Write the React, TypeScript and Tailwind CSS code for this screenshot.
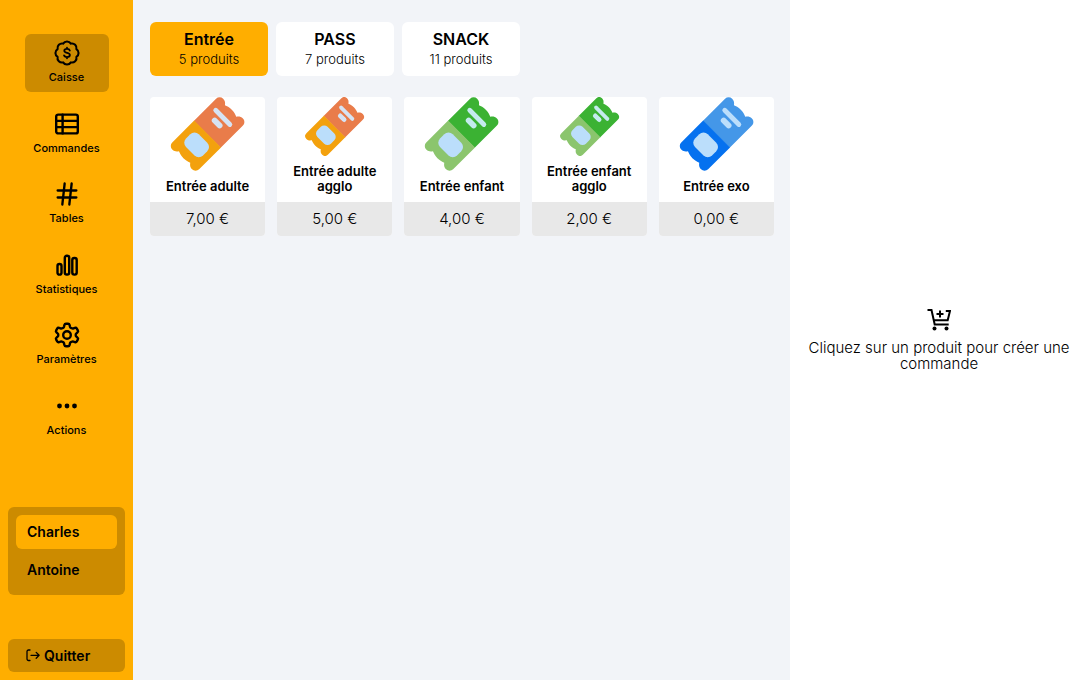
import React from 'react';
import { Hash } from 'lucide-react';

interface IconProps {
  children: React.ReactNode;
}

const Icon: React.FC<IconProps> = ({ children }) => (
  <svg
    className="size-7"
    viewBox="0 0 28 28"
    fill="none"
    stroke="currentColor"
    strokeWidth="2.4"
    strokeLinecap="round"
    strokeLinejoin="round"
    aria-hidden="true"
  >
    {children}
  </svg>
);

const CashIcon = () => (
  <Icon>
    <path
      strokeWidth="2.1"
      d="M10.1 4.6A4.6 4.6 0 0 1 17.9 4.6A4.6 4.6 0 0 1 23.4 10.1A4.6 4.6 0 0 1 23.4 17.9A4.6 4.6 0 0 1 17.9 23.4A4.6 4.6 0 0 1 10.1 23.4A4.6 4.6 0 0 1 4.6 17.9A4.6 4.6 0 0 1 4.6 10.1A4.6 4.6 0 0 1 10.1 4.6Z"
    />
    <path strokeWidth="1.8" d="M16.8 11.6c-.3-1.1-1.3-1.7-2.8-1.7-1.6 0-2.7.7-2.7 1.9 0 2.9 5.6 1.4 5.6 4.3 0 1.3-1.2 2-2.9 2-1.6 0-2.7-.7-3-1.8M14 8.7v1.2M14 18.1v1.2" />
  </Icon>
);

const OrdersIcon = () => (
  <Icon>
    <rect x="3.2" y="4.6" width="21.6" height="18.8" rx="2" />
    <path d="M9.6 4.6v18.8M3.2 10.9h21.6M3.2 17.1h21.6" />
  </Icon>
);

const StatsIcon = () => (
  <Icon>
    <rect x="4.5" y="13" width="4" height="10.6" rx="1.9" />
    <rect x="11.8" y="4.7" width="4.4" height="18.9" rx="2" />
    <rect x="19.3" y="7" width="4.4" height="16.6" rx="2" />
  </Icon>
);

const SettingsIcon = () => (
  <Icon>
    <path d="M11.4 4.1q.3-1.3 1.6-1.3h2q1.3 0 1.6 1.3l.4 1.7q.3 1 1.3 1.3l.4.2q.9.5 1.8.1l1.4-.5q1.3-.4 1.9.7l1 1.8q.7 1.2-.3 2l-1.1 1q-.7.6-.7 1.6t.7 1.6l1.1 1q1 .8.3 2l-1 1.8q-.6 1.1-1.9.7l-1.4-.5q-.9-.4-1.8.1l-.4.2q-1 .3-1.3 1.3l-.4 1.7q-.3 1.3-1.6 1.3h-2q-1.3 0-1.6-1.3L11 22.2q-.3-1-1.3-1.3l-.4-.2q-.9-.5-1.8-.1l-1.4.5q-1.3.4-1.9-.7l-1-1.8q-.7-1.2.3-2l1.1-1q.7-.6.7-1.6t-.7-1.6l-1.1-1q-1-.8-.3-2l1-1.8q.6-1.1 1.9-.7l1.4.5q.9.4 1.8-.1l.4-.2q1-.3 1.3-1.3Z" />
    <circle cx="14" cy="14" r="3.8" />
  </Icon>
);

const DotsIcon = () => (
  <Icon>
    <g fill="currentColor" stroke="none">
      <circle cx="6.5" cy="14" r="2.4" />
      <circle cx="14" cy="14" r="2.4" />
      <circle cx="21.5" cy="14" r="2.4" />
    </g>
  </Icon>
);

const ExitIcon = () => (
  <svg className="size-4" viewBox="0 0 16 16" fill="none" stroke="currentColor" strokeWidth="1.3" strokeLinecap="round" strokeLinejoin="round" aria-hidden="true">
    <path d="M6 2H4.5A1.5 1.5 0 0 0 3 3.5V11a1.5 1.5 0 0 0 1.5 1.5H6M7 7.3h8M12.2 4.4l2.9 2.9-2.9 2.9" />
  </svg>
);

const CartIcon = () => (
  <svg className="size-6" viewBox="0 0 24 24" fill="none" stroke="currentColor" strokeWidth="2" aria-hidden="true">
    <path d="M.5 2h4l3.2 14.5h14M6.5 12.3h14.2L23 3h-4.2M13 2.5v7M9.5 6h7" />
    <circle cx="7.5" cy="20.5" r="2" fill="currentColor" stroke="none" />
    <circle cx="19.5" cy="20.5" r="2" fill="currentColor" stroke="none" />
  </svg>
);

interface TicketProps {
  top: string;
  bottom: string;
  detail: string;
}

const Ticket: React.FC<TicketProps> = ({ top, bottom, detail }) => (
  <svg className="h-full w-full" viewBox="0 0 74 74" aria-hidden="true">
    <g transform="translate(37 37) rotate(45)">
      <path fill={top} d="M-19 .5V-31a5 5 0 0 1 5-5c3 0 4.5 1.500 6 3.500 2-.8 4.500-1.700 8-1.700s6 .9 8 1.700c1.500-2 3-3.500 6-3.500a5 5 0 0 1 5 5V.5Z" />
      <path fill={bottom} d="M-19 0v31a5 5 0 0 0 5 5c3 0 4.5-1.5 6-3.5 2 .8 4.5 1.7 8 1.7s6-.9 8-1.7c1.5 2 3 3.5 6 3.5a5 5 0 0 0 5-5V0Z" />
      <rect x="-12" y="6.5" width="24" height="18" rx="6" fill="#bbdefb" />
      <path d="M-11-22.5H9" stroke={detail} strokeWidth="4.8" strokeLinecap="round" />
      <path d="M-4.5-14.5h7" stroke={detail} strokeWidth="5.8" strokeLinecap="round" />
    </g>
  </svg>
);

const navItems = [
  { label: 'Caisse', icon: <CashIcon />, active: true },
  { label: 'Commandes', icon: <OrdersIcon /> },
  { label: 'Tables', icon: <Hash className="size-7" strokeWidth={2} /> },
  { label: 'Statistiques', icon: <StatsIcon /> },
  { label: 'Paramètres', icon: <SettingsIcon /> },
  { label: 'Actions', icon: <DotsIcon /> },
];

const categories = [
  { name: 'Entrée', count: 5, active: true },
  { name: 'PASS', count: 7 },
  { name: 'SNACK', count: 11 },
];

const orange = { top: '#e97c4a', bottom: '#f3a10d', detail: '#d6e3f3' };
const green = { top: '#3bb233', bottom: '#8bc56d', detail: '#c4ebee' };
const blue = { top: '#4497e8', bottom: '#0571ef', detail: '#bbdefb' };

const products = [
  { name: 'Entrée adulte', price: '7,00 €', colors: orange },
  { name: 'Entrée adulte agglo', price: '5,00 €', colors: orange },
  { name: 'Entrée enfant', price: '4,00 €', colors: green },
  { name: 'Entrée enfant agglo', price: '2,00 €', colors: green },
  { name: 'Entrée exo', price: '0,00 €', colors: blue },
];

const Sidebar = () => (
  <aside className="flex w-[133px] shrink-0 flex-col bg-[#ffae00] px-2 pt-[34px] pb-2">
    <nav className="flex h-[411px] flex-col items-center justify-between">
      {navItems.map((item) => (
        <button
          key={item.label}
          className={`flex h-[58px] w-[84px] flex-col items-center justify-center rounded-md text-[11px] leading-5 font-medium ${item.active ? 'bg-[#cc8b00]' : ''}`}
        >
          {item.icon}
          <span>{item.label}</span>
        </button>
      ))}
    </nav>
    <div className="mt-auto mb-11 flex flex-col gap-1 rounded-md bg-[#cc8b00] p-2">
      <button className="h-[34px] rounded-md bg-[#ffae00] px-[11px] text-left text-sm font-semibold">Charles</button>
      <button className="h-[34px] rounded-md px-[11px] text-left text-sm font-semibold">Antoine</button>
    </div>
    <button className="flex h-[33px] items-center gap-1 rounded-md bg-[#cc8b00] px-4 text-sm font-semibold">
      <ExitIcon />
      Quitter
    </button>
  </aside>
);

const App = () => (
  <div className="flex min-h-screen bg-white font-[Inter,sans-serif] text-black">
    <Sidebar />
    <main className="min-w-0 flex-1 bg-[#f2f4f8] pt-[22px] pr-4 pl-[17px]">
      <div className="flex gap-2">
        {categories.map((category) => (
          <button
            key={category.name}
            className={`flex h-[54px] w-[118px] flex-col items-center justify-center rounded-md ${category.active ? 'bg-[#ffae00]' : 'bg-white'}`}
          >
            <span className="text-base leading-5 font-semibold">{category.name}</span>
            <span className="text-[13px] leading-5 font-light">{category.count} produits</span>
          </button>
        ))}
      </div>
      <div className="mt-[21px] grid grid-cols-5 gap-3">
        {products.map((product) => (
          <button key={product.name} className="flex h-[139px] flex-col overflow-hidden rounded-sm bg-white">
            <span className="block min-h-0 w-full flex-1">
              <Ticket {...product.colors} />
            </span>
            <span className="w-full px-3 pt-2 pb-2 text-[13px] leading-[15px] font-semibold">{product.name}</span>
            <span className="w-full bg-[#e8e8e8] text-[15px] leading-[34px] font-light">{product.price}</span>
          </button>
        ))}
      </div>
    </main>
    <section className="flex w-[298px] shrink-0 flex-col items-center justify-center gap-2 px-4 text-center">
      <CartIcon />
      <p className="text-[15px] leading-4 font-light">Cliquez sur un produit pour créer une commande</p>
    </section>
  </div>
);

export default App;
